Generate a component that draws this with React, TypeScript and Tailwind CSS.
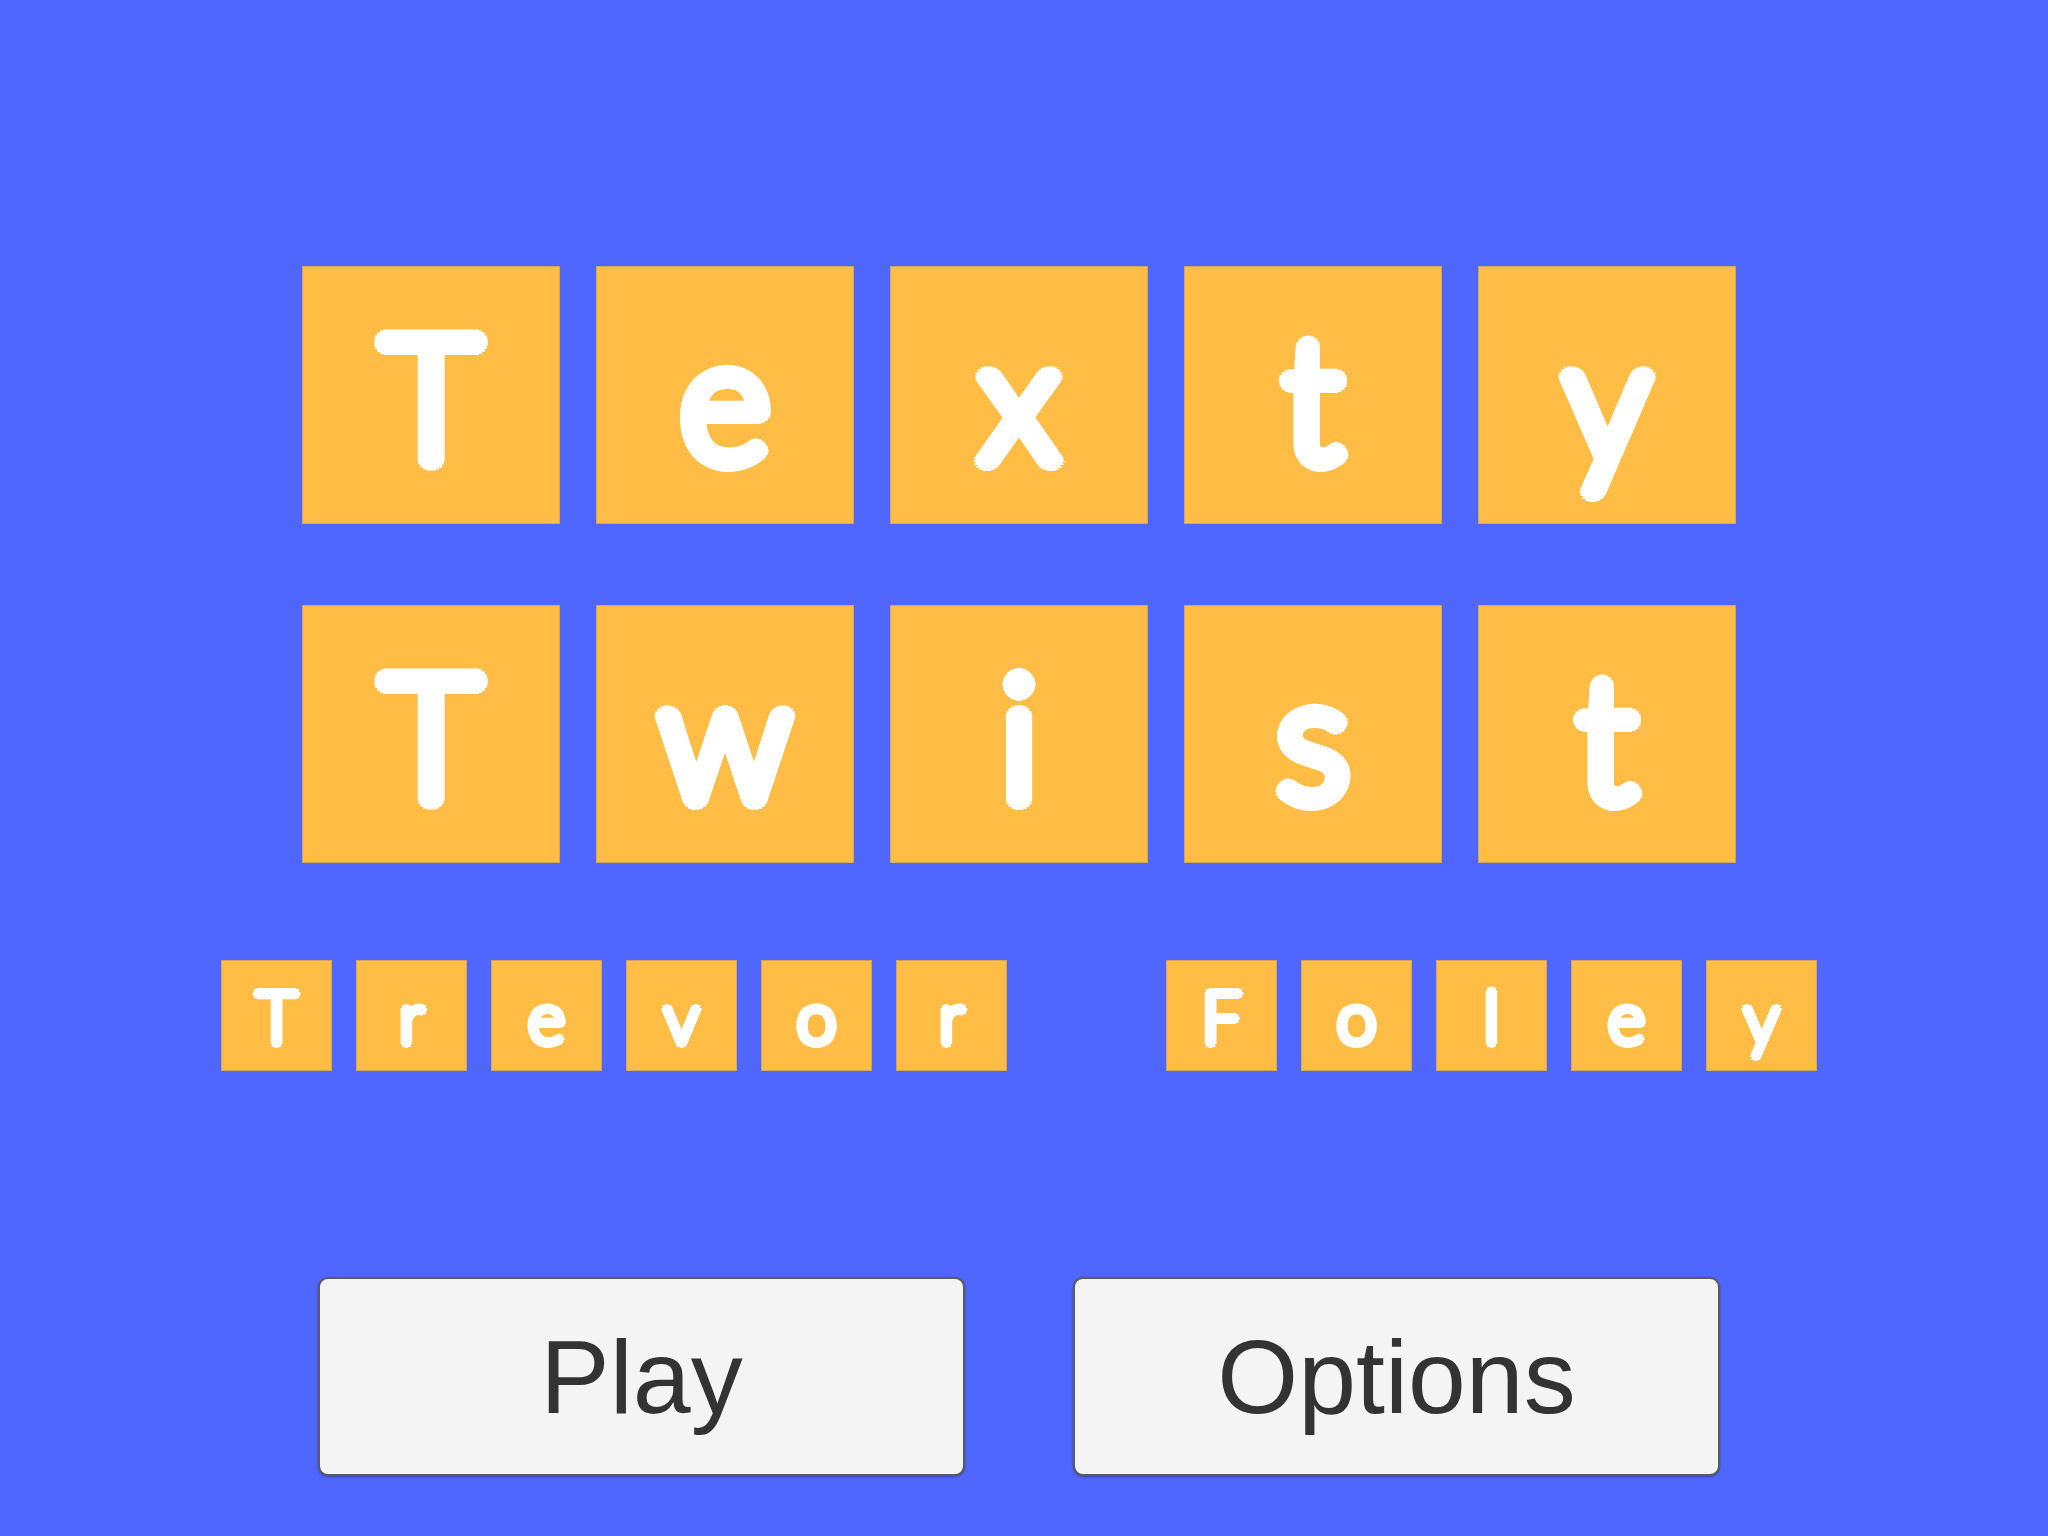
const titleRows = ["Texty", "Twist"];
const nameWords = ["Trevor", "Foley"];

function BigTile({ letter }: { letter: string }) {
  return (
    <div className="flex h-[258px] w-[258px] items-center justify-center border border-[#d3a65c] bg-[#ffbd45]">
      <span className="font-['Lato','Liberation_Sans',sans-serif] text-[173px] font-light leading-none text-white [text-shadow:9px_0_0_#fff,8.31px_3.44px_0_#fff,6.36px_6.36px_0_#fff,3.44px_8.31px_0_#fff,0_9px_0_#fff,-3.44px_8.31px_0_#fff,-6.36px_6.36px_0_#fff,-8.31px_3.44px_0_#fff,-9px_0_0_#fff,-8.31px_-3.44px_0_#fff,-6.36px_-6.36px_0_#fff,-3.44px_-8.31px_0_#fff,0_-9px_0_#fff,3.44px_-8.31px_0_#fff,6.36px_-6.36px_0_#fff,8.31px_-3.44px_0_#fff,4.5px_0_0_#fff,3.18px_3.18px_0_#fff,0_4.5px_0_#fff,-3.18px_3.18px_0_#fff,-4.5px_0_0_#fff,-3.18px_-3.18px_0_#fff,0_-4.5px_0_#fff,3.18px_-3.18px_0_#fff]">
        {letter}
      </span>
    </div>
  );
}

function SmallTile({ letter }: { letter: string }) {
  return (
    <div className="flex h-[111px] w-[111px] items-center justify-center border border-[#d3a65c] bg-[#ffbd45]">
      <span className="font-['Lato','Liberation_Sans',sans-serif] text-[72px] font-light leading-none text-white [text-shadow:4px_0_0_#fff,2.83px_2.83px_0_#fff,0_4px_0_#fff,-2.83px_2.83px_0_#fff,-4px_0_0_#fff,-2.83px_-2.83px_0_#fff,0_-4px_0_#fff,2.83px_-2.83px_0_#fff,2px_0_0_#fff,0_2px_0_#fff,-2px_0_0_#fff,0_-2px_0_#fff]">
        {letter}
      </span>
    </div>
  );
}

function MenuButton({ label }: { label: string }) {
  return (
    <button
      type="button"
      className="flex h-[199px] w-[647px] items-center justify-center rounded-[10px] border-2 border-[#5c5c5c] bg-[#f4f4f4] font-['Liberation_Sans',Arial,sans-serif] text-[104px] leading-none text-[#333333] shadow-[0_1px_2px_rgba(0,0,0,0.35)]"
    >
      {label}
    </button>
  );
}

export default function App() {
  return (
    <div className="flex min-h-screen w-full flex-col items-center bg-[#4f66ff] pr-[10px] pt-[266px]">
      <div className="flex flex-col gap-[81px]">
        {titleRows.map((word) => (
          <div key={word} className="flex gap-[36px]">
            {word.split("").map((letter, index) => (
              <BigTile key={`${word}-${index}`} letter={letter} />
            ))}
          </div>
        ))}
      </div>

      <div className="mt-[97px] flex gap-[159px]">
        {nameWords.map((word) => (
          <div key={word} className="flex gap-[24px]">
            {word.split("").map((letter, index) => (
              <SmallTile key={`${word}-${index}`} letter={letter} />
            ))}
          </div>
        ))}
      </div>

      <div className="mt-[206px] flex gap-[108px]">
        <MenuButton label="Play" />
        <MenuButton label="Options" />
      </div>
    </div>
  );
}
